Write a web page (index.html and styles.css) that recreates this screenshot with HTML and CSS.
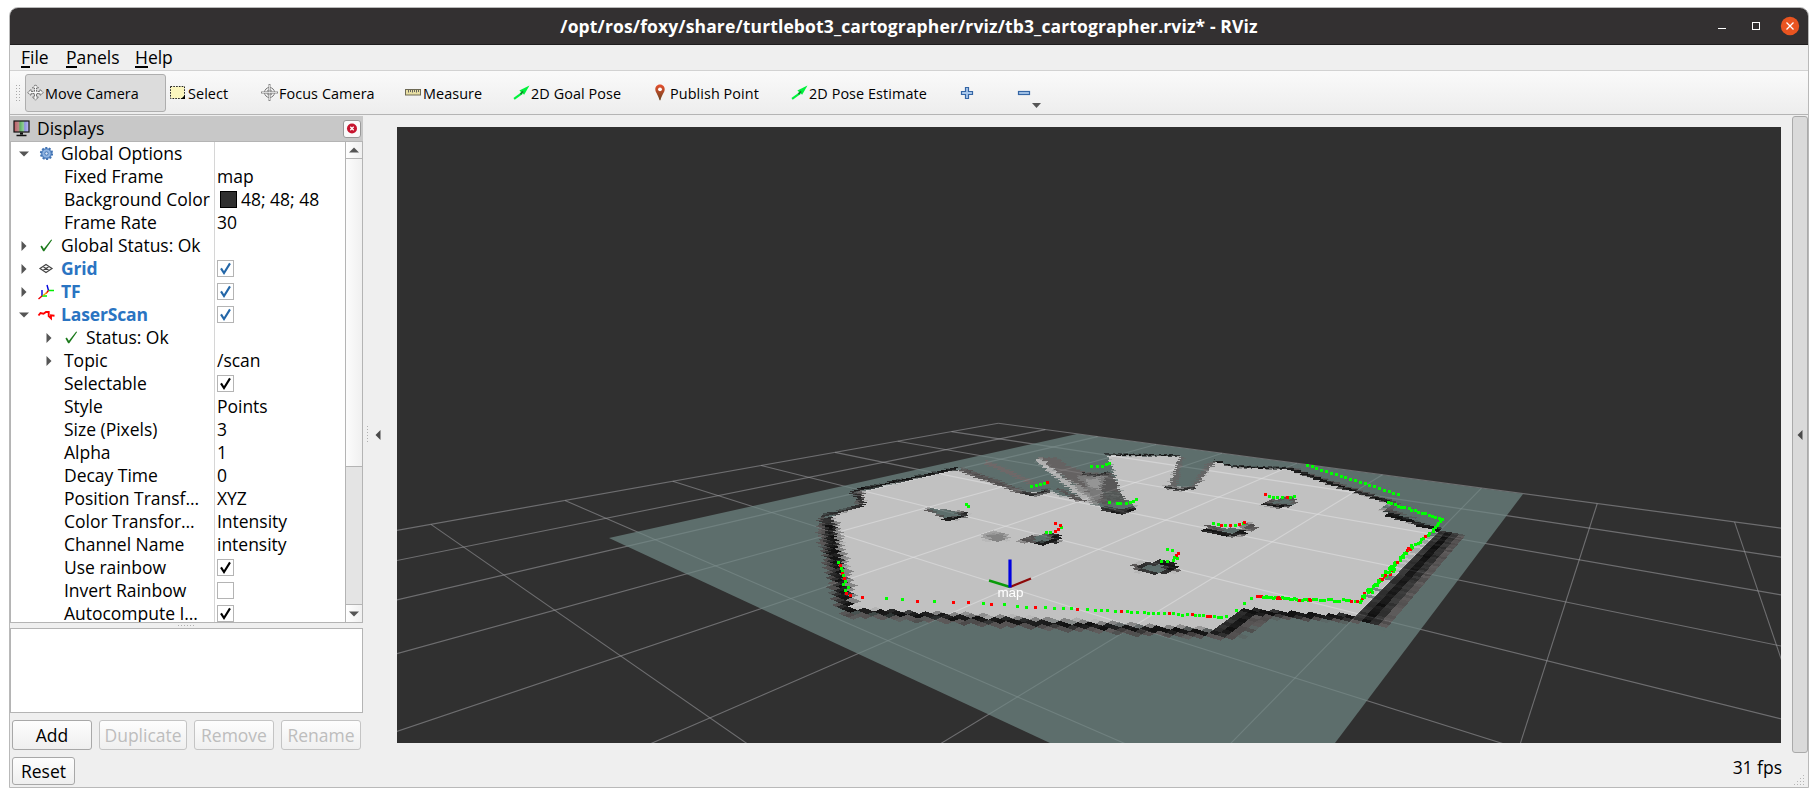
FILE: index.html
```html
<!DOCTYPE html>
<html lang="en">
<head>
<meta charset="utf-8">
<title>RViz</title>
<link rel="stylesheet" href="styles.css">
</head>
<body>
<svg class="defs" width="0" height="0">
  <defs>
    <linearGradient id="pin" x1="0" y1="0" x2="0" y2="1"><stop offset="0" stop-color="#e8502e"/><stop offset="1" stop-color="#6b4420"/></linearGradient>
    <linearGradient id="screen" x1="0" y1="0" x2="1" y2="0"><stop offset="0" stop-color="#c05a62"/><stop offset=".3" stop-color="#b98a88"/><stop offset=".4" stop-color="#5fae66"/><stop offset=".62" stop-color="#8fcf92"/><stop offset=".72" stop-color="#8f8fe0"/><stop offset="1" stop-color="#c0c0f4"/></linearGradient>
    <symbol id="arrow" viewBox="0 0 16 16"><path d="M1 14 8.5 8.500" stroke="#00f23c" stroke-width="2"/><path d="M15.500 1.500 6 6l4.500 4z" fill="#00f23c"/><path d="M7 9.500 9.500 7" stroke="#0a8a28" stroke-width="1.600"/></symbol>
    <symbol id="ok" viewBox="0 0 16 16"><path d="M1.500 9 3 8l2.200 3.400L13 1.600l1 .5L5.600 14H4.400z" fill="#1c7a1c"/></symbol>
    <symbol id="check" viewBox="0 0 17 17"><path d="M4 8.400l3 4.600L13 3.400" fill="none" stroke="currentColor" stroke-width="2.100"/></symbol>
    <symbol id="down" viewBox="0 0 10 6"><path d="M0 .5h10L5 5.500z" fill="#555"/></symbol>
    <symbol id="right" viewBox="0 0 6 10"><path d="M.5 0v10l5-5z" fill="#555"/></symbol>
    <symbol id="left" viewBox="0 0 6 10"><path d="M5.500 0v10L.5 5z" fill="#4a4a4a"/></symbol>
    <symbol id="up" viewBox="0 0 10 6"><path d="M0 5.500h10L5 .5z" fill="#555"/></symbol>
  </defs>
</svg>
<div class="window">
  <header class="titlebar">
    <div class="title">/opt/ros/foxy/share/turtlebot3_cartographer/rviz/tb3_cartographer.rviz* - RViz</div>
    <svg class="controls" width="92" height="20" viewBox="0 0 92 20">
      <path d="M10 12.500h8" stroke="#fff" stroke-width="1"/>
      <rect x="44.500" y="6.500" width="7" height="7" fill="none" stroke="#fff"/>
      <circle cx="82" cy="10" r="9.200" fill="#e95420"/>
      <path d="M78.500 6.500l7 7m0-7l-7 7" stroke="#fff" stroke-width="1.300"/>
    </svg>
  </header>
  <nav class="menu"><span class="m1"><i>F</i>ile</span><span class="m2"><i>P</i>anels</span><span class="m3"><i>H</i>elp</span></nav>
  <div class="toolbar">
    <div class="grip"></div>
    <div class="tool active" style="width:141px"><svg width="17" height="17" viewBox="0 0 17 17"><path d="M8.500 .8l3 3.200H9.600v3.400H13V5.500l3.300 3-3.300 3V9.600H9.600V13h1.900l-3 3.200-3-3.200h1.900V9.600H4v1.900l-3.300-3 3.300-3v1.900h3.400V4H5.500z" fill="#f6f6f6" stroke="#555" stroke-width=".9" stroke-dasharray="2 .7"/></svg><b>Move Camera</b></div>
    <div class="tool" style="width:91px"><svg width="17" height="17" viewBox="0 0 17 17"><rect x=".5" y="2.500" width="14" height="12" fill="#fbf6be" stroke="#222" stroke-dasharray="1.600 1.200"/><path d="M15 11v4h-4z" fill="#000"/></svg><b>Select</b></div>
    <div class="tool" style="width:144px"><svg width="17" height="17" viewBox="0 0 17 17" fill="none" stroke="#777"><circle cx="8.500" cy="8.500" r="5"/><circle cx="8.500" cy="8.500" r="2.700" stroke-dasharray="1 .6"/><path d="M8.500 0v17M0 8.500h17" stroke="#888" stroke-width="2"/><path d="M8.500 1v15M1 8.500h15" stroke="#eee" stroke-width=".8"/><path d="M6 7h5M6 10h5" stroke="#777" stroke-width=".7"/></svg><b>Focus Camera</b></div>
    <div class="tool" style="width:108px"><svg width="17" height="17" viewBox="0 0 17 17"><rect x=".5" y="5.500" width="15" height="5.500" fill="#e8dfa4" stroke="#6e6a55"/><path d="M3.500 6v2.500M5.500 6v2M7.500 6v2.500M9.500 6v2M11.500 6v2.500M13.500 6v2" stroke="#555" stroke-width=".9"/></svg><b>Measure</b></div>
    <div class="tool" style="width:135px"><svg width="17" height="17"><use href="#arrow"/></svg><b>2D Goal Pose</b></div>
    <div class="tool pub" style="width:143px"><svg width="17" height="17" viewBox="0 0 17 17"><path d="M8 .5C4.800.5 3.300 3 3.300 5.200c0 3.300 3.200 6 4.200 11h1c1-5 4.200-7.700 4.200-11C12.700 3 11.200.5 8 .5z" fill="url(#pin)"/><circle cx="8" cy="5.300" r="1.900" fill="#fff"/></svg><b>Publish Point</b></div>
    <div class="tool" style="width:169px"><svg width="17" height="17"><use href="#arrow"/></svg><b>2D Pose Estimate</b></div>
    <div class="tool" style="width:57px"><svg width="14" height="14" viewBox="0 0 14 14"><path d="M5.500 1.500h3v4h4v3h-4v4h-3v-4h-4v-3h4z" fill="#a9c8ec" stroke="#3566a5" stroke-width="1.200"/></svg></div>
    <div class="tool"><svg width="25" height="24" viewBox="0 0 25 24"><rect x="1.500" y="10.500" width="11" height="3" fill="#a9c8ec" stroke="#3566a5" stroke-width="1.200"/><path d="M15 22h9l-4.500 5z" fill="#555"/></svg></div>
  </div>
  <div class="main">
    <aside class="dock">
      <div class="docktitle">
        <svg width="17" height="17" viewBox="0 0 17 17"><rect x="1" y="1" width="15" height="11" fill="url(#screen)" stroke="#111" stroke-width="1.200"/><path d="M7 12.500h3v2H7zM3.500 14.800h10v1.400h-10z" fill="#111"/></svg>
        <span>Displays</span>
        <svg class="close" width="18" height="18" viewBox="0 0 18 18"><rect x=".5" y=".5" width="17" height="17" rx="2.500" fill="#fafafa" stroke="#999"/><circle cx="9" cy="8.500" r="5" fill="#c6152f"/><path d="M7.300 6.800l3.400 3.400m0-3.400l-3.400 3.400" stroke="#fff" stroke-width="1.300"/></svg>
      </div>
      <div class="tree">
        <div class="rows" id="rows"></div>
        <div class="scroll"><div class="sb"><svg width="10" height="6"><use href="#up"/></svg></div><div class="thumb"></div><div class="track"></div><div class="sb last"><svg width="10" height="6"><use href="#down"/></svg></div></div>
      </div>
      <div class="hsplit"><i></i></div>
      <div class="desc"></div>
      <div class="buttons"><button style="width:80px">Add</button><button style="width:88px" disabled>Duplicate</button><button style="width:80px" disabled>Remove</button><button style="width:80px" disabled>Rename</button></div>
    </aside>
    <div class="handle"><i></i><svg width="6" height="10"><use href="#left"/></svg></div>
    <canvas id="view" width="1384" height="616"></canvas>
    <div class="collapse"><svg width="6" height="10"><use href="#left"/></svg></div>
  </div>
  <footer class="status"><button class="reset">Reset</button><span class="fps">31 fps</span><svg width="12" height="12" viewBox="0 0 12 12" fill="#b5b5b5"><path d="M9 0h1v1H9zM6 3h1v1H6zM9 3h1v1H9zM3 6h1v1H3zM6 6h1v1H6zM9 6h1v1H9zM0 9h1v1H0zM3 9h1v1H3zM6 9h1v1H6zM9 9h1v1H9z"/></svg></footer>
</div>
<script src="app.js"></script>
</body>
</html>
```
FILE: styles.css
```css
* { box-sizing: border-box; }
body { margin: 0; background: #fff; font-family: "Open Sans", "Noto Sans", sans-serif; font-size: 17.5px; letter-spacing: -0.02px; color: #000; width: 1818px; height: 797px; overflow: hidden; padding: 7px 9px 9px 9px; }
.defs { display: block; width: 0; height: 0; position: absolute; }
svg { display: block; flex: none; overflow: visible; }
.window { width: 1800px; height: 781px; border: 1px solid #b9b9b9; border-radius: 9px 9px 0 0; background: #efefef; display: flex; flex-direction: column; overflow: hidden; }
.titlebar { height: 37px; flex: none; background: #333031; border-bottom: 1px solid #1f1d1e; display: grid; grid-template-columns: 92px 1fr 92px; align-items: center; padding-right: 8px; }
.titlebar::before { content: ""; }
.title { color: #fff; font-weight: 700; text-align: center; font-size: 17.5px; letter-spacing: 0.13px; white-space: nowrap; padding-left: 8px; line-height: 36px; }
.menu { height: 26px; flex: none; border-bottom: 1px solid #d2d2d2; display: flex; line-height: 24px; padding-left: 11px; }
.menu i { font-style: normal; border-bottom: 2px solid #000; line-height: 18px; display: inline-block; height: 20px; }
.m1 { width: 45px; } .m2 { width: 69px; }
.toolbar { height: 44px; flex: none; background: linear-gradient(#fafafa, #ededed); border-bottom: 1px solid #b4b4b4; display: flex; align-items: center; }
.grip { width: 5px; height: 17px; margin: 0 5px 0 5px; background: radial-gradient(circle, #aaa 0.7px, transparent 0.9px) 0 0 / 3px 3px; }
.tool { height: 38px; display: flex; align-items: center; gap: 1px; padding-left: 2px; font-size: 14.4px; letter-spacing: 0.08px; }
.tool b { font-weight: 400; white-space: nowrap; padding-top: 1px; }
.tool.active { background: #dcdcdc; border: 1px solid #aeaeae; border-radius: 3px; margin-right: 2px; padding-left: 1px; }
.tool.pub { padding-left: 6px; }
.main { display: flex; height: 638px; flex: none; padding-top: 1px; }
.dock { width: 353px; flex: none; display: flex; flex-direction: column; }
.docktitle { height: 25px; background: #c8c8c8; display: flex; align-items: center; padding: 0 2px 0 3px; }
.docktitle span { margin-left: 7px; flex: 1; line-height: 23px; }
.tree { height: 482px; border: 1px solid #b4b4b4; background: #fff; display: flex; overflow: hidden; }
.rows { flex: 1; }
.row { height: 23px; display: flex; line-height: 21px; white-space: nowrap; }
.name { width: 204px; flex: none; border-right: 1px solid #d6d6d6; display: flex; align-items: center; }
.name.sub { padding-left: 25px; }
.exp { width: 25px; display: flex; justify-content: center; }
.ico { width: 20px; display: flex; justify-content: center; margin-right: 5px; }
.name.leaf { padding-left: 53px; }
.top { color: #2a74c2; font-weight: 700; letter-spacing: -0.15px; }
.val { padding-left: 2px; display: flex; align-items: center; }
.val em { font-style: normal; }
.box { width: 17px; height: 17px; border: 1px solid #b4b4b4; background: #fff; }
.box svg { margin: -1px; }
.box.blue { color: #2467a8; }
.swatch { width: 17px; height: 17px; background: #303030; border: 1px solid #000; margin: 0 4px 0 3px; }
.scroll { width: 17px; flex: none; border-left: 1px solid #b4b4b4; display: flex; flex-direction: column; }
.sb { height: 17px; display: flex; align-items: center; justify-content: center; border-bottom: 1px solid #b4b4b4; background: linear-gradient(90deg, #fff, #f0f0f0); }
.sb.last { border-bottom: 0; }
.thumb { height: 308px; background: linear-gradient(90deg, #fcfcfc, #f0f0f0); border-bottom: 1px solid #b4b4b4; }
.track { flex: 1; background: #e4e4e4; border-bottom: 1px solid #b4b4b4; }
.hsplit { height: 5px; display: flex; justify-content: center; align-items: center; }
.hsplit i { width: 18px; height: 1px; background: repeating-linear-gradient(90deg, #b0b0b0 0 1px, transparent 1px 3px); }
.desc { height: 85px; border: 1px solid #b4b4b4; background: #fff; }
.buttons { display: flex; justify-content: space-between; padding: 7px 2px 0; }
button { height: 30px; font: inherit; letter-spacing: inherit; padding: 0 0 1px; border: 1px solid #a8a8a8; border-radius: 3px; background: linear-gradient(#fdfdfd, #efefef); color: #000; }
button:disabled { color: #bdbdbd; border-color: #c4c4c4; }
.handle { width: 34px; flex: none; display: flex; align-items: center; padding-left: 4px; gap: 7px; }
.handle i { width: 1px; height: 17px; background: repeating-linear-gradient(#b0b0b0 0 1px, transparent 1px 3px); }
#view { display: block; width: 1384px; height: 616px; margin-top: 11px; flex: none; }
.collapse { width: 16px; height: 637px; margin-left: 11px; background: #dadada; border: 1px solid #aaa; border-radius: 3px; display: flex; align-items: center; justify-content: center; }
.status { display: flex; align-items: flex-start; flex: 1; padding: 4px 0 0 2px; }
.reset { width: 63px; height: 28px; }
.fps { margin-left: auto; line-height: 20px; }
.status svg { margin: 18px 2px 0 12px; }
```
FILE: app.js
```js
// ---- property tree ----
const GEAR = '<svg width="15" height="15" viewBox="0 0 15 15"><circle cx="7.5" cy="7.5" r="5.600" fill="#7ba4d8" stroke="#4273b3" stroke-width="2" stroke-dasharray="2 1.500"/><circle cx="7.5" cy="7.5" r="4.600" fill="#8fb4e2" stroke="#4273b3" stroke-width=".8"/><circle cx="7.5" cy="7.5" r="1.700" fill="#d7e5f6" stroke="#4273b3"/></svg>';
const OK = '<svg width="15" height="15"><use href="#ok"/></svg>';
const GRID = '<svg width="16" height="12" viewBox="0 0 16 12" fill="none" stroke="#444" stroke-width="1.200"><path d="M8 1.500l6 4-6 4-6-4zM5 3.500l6 4M11 3.500l-6 4"/></svg>';
const TF = '<svg width="16" height="16" viewBox="0 0 16 16" fill="none" stroke-width="1.400"><path d="M10.500 6.500 9 1M4 12V6" stroke="#00d"/><path d="M10.500 6.500H16M4 12h5" stroke="#0e0"/><path d="M4 12L.5 15M10.500 6.500 8 9.500" stroke="#e00"/><path d="M5 11.500l4-3" stroke="#f8a000"/></svg>';
const SCAN = '<svg width="17" height="10" viewBox="0 0 17 10"><path d="M.5 5.500 2.500 3l3 .7L8 2h2.700v4L13 8.300V5.300l3.500.4" fill="none" stroke="#f00" stroke-width="1.900"/></svg>';
const tree = [
  ['down', GEAR, 'Global Options'], [0, 0, 'Fixed Frame', 'map'], [0, 0, 'Background Color', '48; 48; 48', 'swatch'], [0, 0, 'Frame Rate', '30'],
  ['right', OK, 'Global Status: Ok'], ['right', GRID, 'Grid', true, 'top'], ['right', TF, 'TF', true, 'top'], ['down', SCAN, 'LaserScan', true, 'top'],
  ['right', OK, 'Status: Ok', '', 'sub'], ['right', 0, 'Topic', '/scan', 'sub'],
  [0, 0, 'Selectable', true], [0, 0, 'Style', 'Points'], [0, 0, 'Size (Pixels)', '3'], [0, 0, 'Alpha', '1'], [0, 0, 'Decay Time', '0'],
  [0, 0, 'Position Transf…', 'XYZ'], [0, 0, 'Color Transfor…', 'Intensity'], [0, 0, 'Channel Name', 'intensity'],
  [0, 0, 'Use rainbow', true], [0, 0, 'Invert Rainbow', false], [0, 0, 'Autocompute I…', true]
];
document.getElementById('rows').innerHTML = tree.map(([exp, icon, name, value, kind]) => {
  let head = '';
  if (exp) head += `<span class="exp"><svg width="${exp === 'down' ? 10 : 6}" height="${exp === 'down' ? 6 : 10}"><use href="#${exp}"/></svg></span>`;
  if (icon) head += `<span class="ico">${icon}</span>`;
  const cls = ['name', kind === 'sub' ? 'sub' : '', exp ? '' : 'leaf'].join(' ');
  const label = `<span class="${kind === 'top' ? 'top' : ''}"${exp && !icon ? ' style="margin-left:3px"' : ''}>${name}</span>`;
  let val = '';
  if (typeof value === 'boolean') val = `<span class="box ${kind === 'top' ? 'blue' : ''}">${value ? '<svg width="17" height="17"><use href="#check"/></svg>' : ''}</span>`;
  else if (value) val = (kind === 'swatch' ? '<span class="swatch"></span>' : '') + `<em>${value}</em>`;
  return `<div class="row"><div class="${cls}">${head}${label}</div><div class="val">${val}</div></div>`;
}).join('');

// ---- 3D view ----
const W = 1384, H = 616, OX = 397, OY = 127;
// ground plane projection, one unit per grid cell
const P = { x: 998.3, y: 423.3, xu: -5.79, xv: -109.45, yu: -15.4, yv: -20.12, c: -0.0505, d: -0.0659 };
const project = (u, v) => { const w = 1 + P.c * u + P.d * v; return [(P.x + P.xu * u + P.xv * v) / w, (P.y + P.yu * u + P.yv * v) / w]; };
function unproject(X, Y) {
  const a = P.c * X - P.xu, b = P.d * X - P.xv, e = P.x - X;
  const c = P.c * Y - P.yu, d = P.d * Y - P.yv, f = P.y - Y;
  const det = a * d - b * c;
  return [(e * d - b * f) / det, (a * f - e * c) / det];
}
const hash = (a, b) => { let h = (a * 374761393 + b * 668265263) | 0; h = Math.imul(h ^ (h >>> 13), 1274126177); return ((h ^ (h >>> 16)) >>> 0) / 4294967296; };
function canvas() { const c = document.createElement('canvas'); c.width = W; c.height = H; const x = c.getContext('2d'); x.translate(-OX, -OY); return [c, x]; }
function path(g, pts) { g.beginPath(); pts.forEach((p, i) => i ? g.lineTo(p[0], p[1]) : g.moveTo(p[0], p[1])); }
const g = document.getElementById('view').getContext('2d');
g.fillStyle = '#303030'; g.fillRect(0, 0, W, H);
g.translate(-OX, -OY);
g.strokeStyle = 'rgba(160,160,164,.55)'; g.lineWidth = 1.1;
for (let k = 0; k <= 10; k++) {
  const vEnd = Math.min(10, (0.97 + P.c * k) / -P.d), uEnd = Math.min(10, (0.97 + P.d * k) / -P.c);
  path(g, [project(k, 0), project(k, vEnd)]); g.stroke();
  path(g, [project(0, k), project(uEnd, k)]); g.stroke();
}

// occupancy map
const [src, m] = canvas();
const fill = (c, ...p) => { m.fillStyle = c; path(m, p); m.closePath(); m.fill(); };
const line = (c, w, ...p) => { m.strokeStyle = c; m.lineWidth = w; m.lineJoin = 'round'; path(m, p); m.stroke(); };
const blob = (c, x, y, rx, ry) => { m.fillStyle = c; m.beginPath(); m.ellipse(x, y, rx, ry, 0, 0, 7); m.fill(); };
const TEAL = '#708986', FREE = '#fff', BLK = '#0c0c0c', DK = '#2c2c2c', GR = '#646060', LG = '#a8a8a8';
m.fillStyle = TEAL; m.fillRect(OX, OY, W, H);
fill(FREE, [957,470],[860,492],[864,505],[832,516],[833,525],[842,557],[848,583],[852,610],[1000,619],[1213,630],[1246,610],[1353,616],[1436,532],[1386,514],[1384,507],[1396,504],[1290,470],[1240,468],[1233,467],[1215,462],[1193,488],[1170,487],[1180,457],[1108,456],[1122,495],[1137,508],[1107,510],[1080,500],[1050,490],[1023,492],[980,477]);
// outer walls
line(BLK, 2.4, [957,469],[856,491]);
line(GR, 8, [858,492],[862,505]); line(DK, 4, [853,492],[860,499],[863,506]);
line(DK, 3, [863,506],[822,517]);
line(LG, 7, [835,522],[841,550],[850,590],[853,604]);
line(GR, 14, [826,518],[827,540],[834,570],[844,610]);
line(DK, 12, [828,518],[831,540],[837,570],[847,610]);
line(BLK, 6, [829,524],[833,545],[839,575],[849,608]);
line(GR, 4, [843,615],[1000,625],[1228,638]);
line(LG, 2, [860,610],[1000,617],[1212,630]);
line(BLK, 4.500, [842,610],[1000,621],[1225,634]);
fill(GR, [1215,632],[1244,610],[1278,613],[1240,639],[1218,637]); fill(DK, [1213,631],[1244,609],[1264,611],[1228,638]); fill(BLK, [1221,632],[1250,610],[1258,611],[1228,636]);
line(GR, 3.500, [1264,616],[1368,622]); line(BLK, 5, [1246,612],[1362,619]);
// east wall follows the cell columns
const [ua, va] = unproject(1436, 531), [ub, vb] = unproject(1353, 617), [uo] = unproject(1456, 534);
const u0 = Math.round((ua + ub) * 10) / 20, uw = Math.max(0.2, Math.round((uo - ua) * 20) / 20);
const band = (c, f0, f1) => fill(c, project(u0 + uw * f0, va), project(u0 + uw * f1, va), project(u0 + uw * f1, vb + .05), project(u0 + uw * f0, vb + .05));
band(GR, 0, 1.02); band('#343434', -.02, .72); band(BLK, .3, .6);
line(BLK, 1.6, [1105,455],[1180,456]);
line(BLK, 2, [1215,461],[1233,467],[1290,469]);
line(GR, 4, [1290,469],[1340,486],[1398,505]); line(BLK, 2.5, [1290,469],[1340,487],[1392,503]);
fill(GR, [1381,511],[1400,505],[1412,508],[1420,520]);
fill(TEAL, [1393,510],[1404,505],[1440,520],[1440,528]);
line(BLK, 4, [1386,514],[1440,531]);
// shadow fan at the far side
fill(TEAL, [957,470],[980,460],[1036,459],[1092,504],[1060,496],[1050,490],[1023,494],[980,477]);
line(GR, 5, [962,470],[1024,493]);
line('#8a8080', 4, [985,462],[1032,483]);
fill(GR, [1052,486],[1068,492],[1090,504],[1076,501]);
fill('#7c7878', [1038,458],[1056,458],[1110,474],[1127,504],[1103,506],[1084,492]);
fill(TEAL, [1058,458],[1104,456],[1112,474],[1086,473],[1068,466]);
fill('#9a9a9a', [1078,476],[1108,477],[1112,492],[1096,502],[1084,484]);
fill('#c0c0c0', [1086,480],[1100,478],[1100,490],[1092,488]);
fill('#b4b4b4', [1070,480],[1084,488],[1102,508],[1090,503]);
line('#e8e8e8', 5, [1038,460],[1060,478],[1090,503]);
fill('#6a6868', [1106,476],[1113,474],[1126,506],[1104,504],[1102,490]);
fill('#686e6c', [1104,492],[1120,492],[1130,508],[1108,508]); blob(TEAL, 1120, 506, 10, 4);
line(DK, 2, [1083,474],[1096,476],[1110,473]);
line(DK, 4, [1103,509],[1120,512],[1136,509]); line(BLK, 2, [1110,512],[1122,514],[1136,510]);
line(DK, 3, [1022,493],[1035,495],[1049,491]);
fill('#7c7c7c', [1180,457],[1184,457],[1177,488],[1170,487]); fill('#7c7c7c', [1209,463],[1215,462],[1196,488],[1191,488]);
line(DK, 2.500, [1166,488],[1180,490],[1195,488]);
// pillars
fill(GR, [924,508],[948,511],[968,512],[948,521]); fill(TEAL, [930,509],[956,512],[962,515],[946,519]);
line(BLK, 3, [945,520],[956,519],[968,515]); line(DK, 3, [958,515],[969,514]);
blob('#cfcfcf', 996, 537, 14, 5); blob('#a6a6a6', 998, 538, 9, 4);
fill(GR, [1019,541],[1034,536],[1058,534],[1064,540],[1046,545],[1026,543]); line(BLK, 4, [1053,535],[1061,539],[1048,543],[1036,544]); blob(TEAL, 1042, 539, 8, 3.500);
fill(GR, [1261,504],[1270,501],[1296,496],[1296,505],[1280,509]); fill(TEAL, [1270,504],[1293,497],[1292,505]); line(BLK, 2.500, [1263,504],[1278,507],[1293,506]);
blob(LG, 1248, 528, 8, 4); blob(GR, 1251, 527, 5, 3.500);
line(GR, 7, [1206,529],[1222,532],[1243,533]); line(BLK, 3.500, [1205,530],[1220,533],[1234,536],[1246,532]); blob(TEAL, 1231, 531, 9, 3);
blob(GR, 1156, 568, 24, 6); blob(DK, 1158, 568, 18, 6.500); line(BLK, 4, [1160,562],[1176,566],[1170,572]); blob(TEAL, 1155, 569, 9, 3.800);

// resample in 0.05 m cells
const data = m.getImageData(0, 0, W, H).data;
const [dst, o] = canvas();
const out = o.createImageData(W, H);
for (let y = 290; y < H; y++) for (let x = 180; x < 1140; x++) {
  const [u, v] = unproject(x + OX + .5, y + OY + .5);
  const cu = Math.floor(u * 20), cv = Math.floor(v * 20);
  let [sx, sy] = project((cu + .5) / 20, (cv + .5) / 20);
  sx = Math.min(W - 1, Math.max(0, Math.round(sx - OX + (hash(cu, cv) - .5) * 2)));
  sy = Math.min(H - 1, Math.max(0, Math.round(sy - OY)));
  const i = (sy * W + sx) * 4, j = (y * W + x) * 4;
  const r = data[i], dark = r < 105 ? (hash(cv, cu) - .4) * 26 : 0;
  for (let k = 0; k < 3; k++) out.data[j + k] = data[i + k] + dark;
  out.data[j + 3] = 179;
}
o.putImageData(out, 0, 0);
g.save();
path(g, [[609,538],[1077,434],[1523,494],[1335,743],[1050,743]]); g.clip();
g.drawImage(dst, OX, OY);
g.restore();

// laser points
const dot = (x, y, red) => { g.fillStyle = red ? '#f00' : '#0f0'; g.fillRect(Math.round(x) - 1, Math.round(y) - 1, 3, 3); };
const small = (list) => list.forEach(p => dot(...p));
const run = (x1, y1, x2, y2, n, jit, red) => { for (let i = 0; i < n; i++) { const t = i / (n - 1); dot(x1 + (x2 - x1) * t + (hash(i, n) - .5) * jit, y1 + (y2 - y1) * t + (hash(n, i + 7) - .5) * jit, hash(i + 3, n * 5) < red); } };
small([[862,597,1],[886,598],[902,599],[917,601,1],[934,601],[953,602,1],[968,602,1],[983,603],[991,604,1],[1004,604],[1017,606],[1026,607],[1035,607,1],[1045,607],[1054,608],[1063,608],[1071,608],[1077,609,1],[1087,609],[1095,610],[1101,610],[1107,610],[1115,611],[1121,611,1],[1127,611],[1131,612],[1137,612],[1144,612],[1148,613],[1153,613],[1158,613],[1164,613],[1169,613,1],[1173,613],[1178,614],[1182,615],[1187,614],[1192,614,1],[1195,615],[1199,615],[1203,615],[1207,616,1],[1210,616,1],[1214,616],[1218,617],[1221,617],[1226,616],[1236,610],[1244,603],[1251,598]]);
small([[838,562],[840,565,1],[841,568],[842,571],[842,573,1],[843,575],[844,578,1],[845,581],[843,584],[848,587],[845,590],[846,593,1],[850,595,1]]);
run(1257, 596, 1310, 600, 28, 1.5, .4); run(1310, 599, 1360, 601, 18, 2, .25);
run(1360, 601, 1368, 590, 10, 3, .3); run(1366, 594, 1394, 566, 38, 6, .25); run(1386, 573, 1412, 546, 26, 3, .2); run(1411, 548, 1434, 530, 12, 2, .35);
run(1433, 529, 1442, 519, 6, 1, 0); run(1442, 519, 1388, 502, 17, 1, 0);
run(1307, 465, 1398, 494, 20, .5, .08);
small([[1031,486],[1036,485],[1040,484],[1044,483],[1047,482,1],[1091,466],[1097,466],[1102,466],[1106,464],[1109,463],[1109,502],[1117,503],[1120,503],[1126,503],[1130,502],[1133,501],[1136,499]]);
small([[1046,532],[1050,532],[1055,531,1],[1058,529,1],[1061,527],[1060,525,1],[1055,523,1],[966,504],[968,506],[1265,494,1],[1269,496],[1273,497],[1277,497],[1282,497],[1287,497,1],[1290,497],[1294,496]]);
small([[1213,523],[1218,524],[1221,525,1],[1225,525],[1230,525,1],[1235,525],[1239,524,1],[1243,523],[1244,522,1],[1161,561],[1167,561],[1173,560],[1177,558],[1176,555,1],[1178,553,1],[1172,550],[1167,549],[1174,557]]);

// map frame axes
const axis = (c, w, ...p) => { g.strokeStyle = c; g.lineWidth = w; path(g, p); g.stroke(); };
axis('#0a9a0a', 2.4, [989,580.5],[1010,587]); axis('#8c0a0a', 2.4, [1010,587],[1031,578.5]); axis('#0000e0', 3.2, [1010,559.500],[1010,587.500]);
g.fillStyle = '#fff'; g.font = '13.5px "Liberation Sans", sans-serif'; g.textAlign = 'center'; g.fillText('map', 1010.5, 597);
```
